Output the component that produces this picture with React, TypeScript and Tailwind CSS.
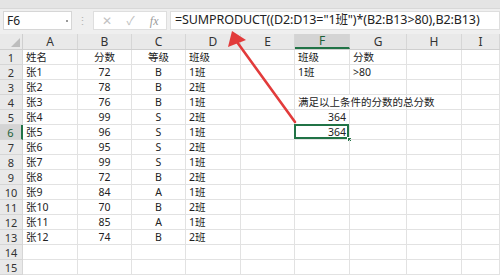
import React from "react";

const cols = ["A", "B", "C", "D", "E", "F", "G", "H", "I"];
const widths = [55, 54, 54, 55, 54, 55, 57, 55, 38];

type Row = (string | null)[];

// A, B, C, D, E, F, G, H, I
const data: Row[] = [
  ["姓名", "分数", "等级", "班级", null, "班级", "分数", null, null],
  ["张1", "72", "B", "1班", null, "1班", ">80", null, null],
  ["张2", "78", "B", "2班", null, null, null, null, null],
  ["张3", "76", "B", "1班", null, "满足以上条件的分数的总分数", null, null, null],
  ["张4", "99", "S", "2班", null, "364", null, null, null],
  ["张5", "96", "S", "1班", null, "364", null, null, null],
  ["张6", "95", "S", "2班", null, null, null, null, null],
  ["张7", "99", "S", "1班", null, null, null, null, null],
  ["张8", "72", "B", "2班", null, null, null, null, null],
  ["张9", "84", "A", "1班", null, null, null, null, null],
  ["张10", "70", "B", "2班", null, null, null, null, null],
  ["张11", "85", "A", "1班", null, null, null, null, null],
  ["张12", "74", "B", "2班", null, null, null, null, null],
  [null, null, null, null, null, null, null, null, null],
  [null, null, null, null, null, null, null, null, null],
];

const align = (r: number, c: number) => {
  if (c === 1 || c === 2) return "justify-center";
  if (c === 5 && (r === 4 || r === 5)) return "justify-end pr-[3px]";
  return "justify-start pl-[3px]";
};

const App = () => {
  return (
    <div
      className="relative w-[500px] h-[275px] overflow-hidden bg-[#efefef] text-[#222]"
      style={{ fontFamily: '"Noto Sans", "Noto Sans CJK SC", sans-serif' }}
    >
      {/* ribbon edge */}
      <div className="h-[9px] bg-[#e4e4e4] border-b border-[#d8d8d8]" />

      {/* formula bar */}
      <div className="flex items-center h-[21px] pl-[3px] mt-[1px]">
        <div className="flex shrink-0 items-center justify-between w-[69px] h-[19px] bg-white border border-[#d6d6d6] pl-[3px] pr-[3px]">
          <span className="text-[12px] leading-none">F6</span>
          <span className="w-[2px] h-[2px] bg-[#777] rounded-full" />
        </div>
        <div className="w-[21px] shrink-0 flex justify-center text-[#b4b4b4] text-[11px] leading-none">⋮</div>
        <div className="flex shrink-0 items-center w-[74px] h-[19px] bg-white border border-[#dedede]">
          <span className="w-[24px] text-center text-[#c2c2c2] text-[12px] leading-none ml-[1px]">✕</span>
          <span className="w-[24px] text-center text-[#c2c2c2] text-[12px] leading-none">✓</span>
          <span
            className="w-[24px] text-center text-[#9a9a9a] text-[12px] leading-none italic"
            style={{ fontFamily: '"Liberation Serif", serif' }}
          >
            fx
          </span>
        </div>
        <div className="flex items-center flex-1 h-[19px] ml-[3px] bg-white border border-[#dedede] pl-[4px]">
          <span className="text-[12.5px] leading-none whitespace-nowrap tracking-[-0.1px]">
            =SUMPRODUCT((D2:D13="1班")*(B2:B13&gt;80),B2:B13)
          </span>
        </div>
      </div>

      {/* sheet */}
      <div className="mt-[3px] bg-white h-[300px]">
        {/* column headers */}
        <div className="flex h-[16px] bg-[#e9e9e9] border-b border-[#cfcfcf]">
          <div className="relative shrink-0 w-[23px] border-r border-[#cfcfcf]">
            <div className="absolute right-[2px] bottom-[2px] w-0 h-0 border-l-[9px] border-l-transparent border-b-[9px] border-b-[#bdbdbd]" />
          </div>
          {widths.map((w, i) => (
            <div
              key={i}
              className={`flex shrink-0 items-center justify-center text-[12px] leading-none border-r border-[#d6d6d6] ${
                i === 5 ? "bg-[#d4d4d4] text-[#1d5f38] border-b-2 border-b-[#217346]" : "text-[#333]"
              }`}
              style={{ width: w }}
            >
              {cols[i]}
            </div>
          ))}
        </div>

        {/* rows */}
        {data.map((row, r) => (
          <div key={r} className="flex h-[15px]">
            <div
              className={`w-[23px] shrink-0 flex items-center justify-center text-[11px] leading-none border-r border-b border-[#d6d6d6] ${
                r === 5 ? "bg-[#d4d4d4] text-[#1d5f38] border-r-2 border-r-[#217346]" : "bg-[#e9e9e9] text-[#333]"
              }`}
            >
              {r + 1}
            </div>
            {row.map((v, c) => {
              const selected = r === 5 && c === 5;
              const overflow = r === 3 && c === 5;
              return (
                <div
                  key={c}
                  className={`relative shrink-0 flex items-center text-[10.5px] leading-none border-b border-[#e2e2e2] ${
                    overflow ? "" : "border-r"
                  } ${align(r, c)}`}
                  style={{ width: widths[c] }}
                >
                  {v !== null && (
                    <span className={`whitespace-nowrap ${overflow ? "absolute left-[3px] z-10" : ""}`}>{v}</span>
                  )}
                  {selected && (
                    <>
                      <div className="absolute -left-[1px] -top-[1px] right-0 bottom-0 border-2 border-[#217346]" />
                      <div className="absolute -right-[3px] -bottom-[3px] w-[5px] h-[5px] bg-[#217346] border border-white" />
                    </>
                  )}
                </div>
              );
            })}
          </div>
        ))}
        <div className="flex h-[15px]">
          <div className="w-[23px] shrink-0 bg-[#e9e9e9] border-r border-[#d6d6d6]" />
        </div>
      </div>

      {/* annotation arrow */}
      <svg className="absolute inset-0 pointer-events-none" width="500" height="275" viewBox="0 0 500 275">
        <line x1="295" y1="122" x2="237" y2="42" stroke="#e23b3b" strokeWidth="2.6" strokeLinecap="round" />
        <polygon points="232,31 246,40 228,47" fill="#e23b3b" />
      </svg>
    </div>
  );
};

export default App;
